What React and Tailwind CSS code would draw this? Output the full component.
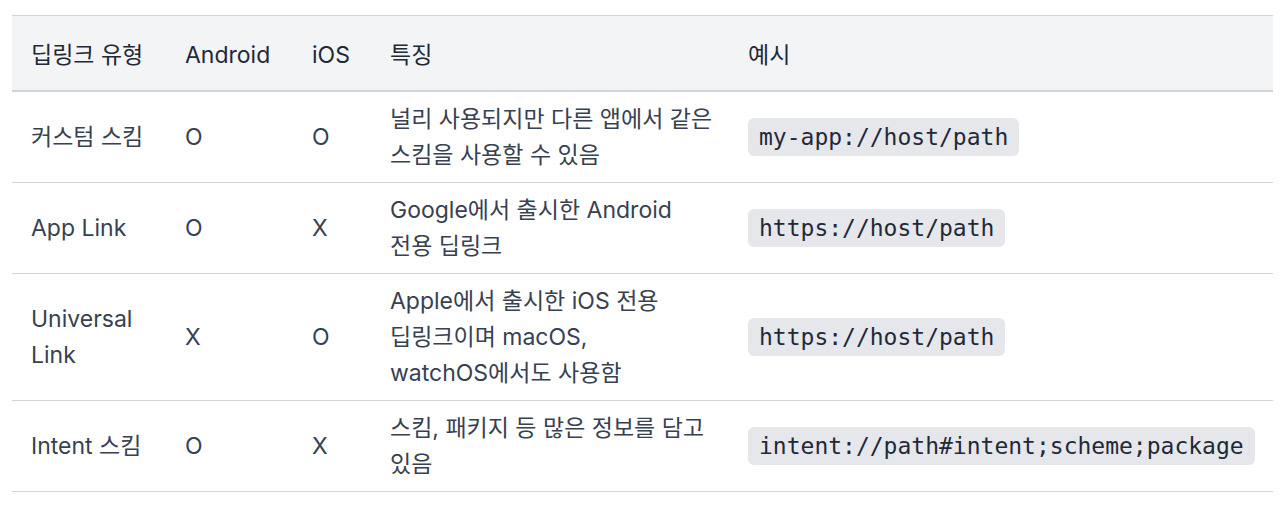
import React from 'react';

const rows = [
  {
    type: '커스텀 스킴',
    android: 'O',
    ios: 'O',
    desc: ['널리 사용되지만 다른 앱에서 같은', '스킴을 사용할 수 있음'],
    example: 'my-app://host/path',
  },
  {
    type: 'App Link',
    android: 'O',
    ios: 'X',
    desc: ['Google에서 출시한 Android', '전용 딥링크'],
    example: 'https://host/path',
  },
  {
    type: ['Universal', 'Link'],
    android: 'X',
    ios: 'O',
    desc: ['Apple에서 출시한 iOS 전용', '딥링크이며 macOS,', 'watchOS에서도 사용함'],
    example: 'https://host/path',
  },
  {
    type: 'Intent 스킴',
    android: 'O',
    ios: 'X',
    desc: ['스킴, 패키지 등 많은 정보를 담고', '있음'],
    example: 'intent://path#intent;scheme;package',
  },
];

const lines = (v) =>
  Array.isArray(v)
    ? v.map((l, i) => (
        <React.Fragment key={i}>
          {i > 0 && <br />}
          {l}
        </React.Fragment>
      ))
    : v;

const App = () => {
  return (
    <div
      className="min-h-screen bg-white pt-[15px] pl-[12px]"
      style={{ fontFamily: '"Inter", "Noto Sans CJK KR", sans-serif' }}
    >
      <table className="table-fixed border-collapse w-[1261px] text-[23px] leading-[36px]">
        <colgroup>
          <col className="w-[154px]" />
          <col className="w-[127px]" />
          <col className="w-[78px]" />
          <col className="w-[358px]" />
          <col className="w-[544px]" />
        </colgroup>
        <thead>
          <tr className="bg-[#f3f4f6] border-t border-[#d1d5db] border-b-2 border-b-[#d1d5db]">
            {['딥링크 유형', 'Android', 'iOS', '특징', '예시'].map((h) => (
              <th
                key={h}
                className="text-left font-normal text-[#1f2937] px-[19px] pt-[21px] pb-[17px] whitespace-nowrap"
              >
                {h}
              </th>
            ))}
          </tr>
        </thead>
        <tbody>
          {rows.map((r, i) => (
            <tr key={i} className="border-b border-[#d1d5db] text-[#374151]">
              <td className="px-[19px] py-[9px] align-middle whitespace-nowrap">{lines(r.type)}</td>
              <td className="px-[19px] py-[9px] align-middle">{r.android}</td>
              <td className="px-[19px] py-[9px] align-middle">{r.ios}</td>
              <td className="px-[19px] py-[9px] align-middle whitespace-nowrap">{lines(r.desc)}</td>
              <td className="px-[19px] py-[9px] align-middle">
                <code
                  className="bg-[#e5e7eb] text-[#1f2937] rounded-[6px] px-[11px] py-[6px] text-[23px] whitespace-nowrap"
                  style={{ fontFamily: '"DejaVu Sans Mono", monospace' }}
                >
                  {r.example}
                </code>
              </td>
            </tr>
          ))}
        </tbody>
      </table>
    </div>
  );
};

export default App;
